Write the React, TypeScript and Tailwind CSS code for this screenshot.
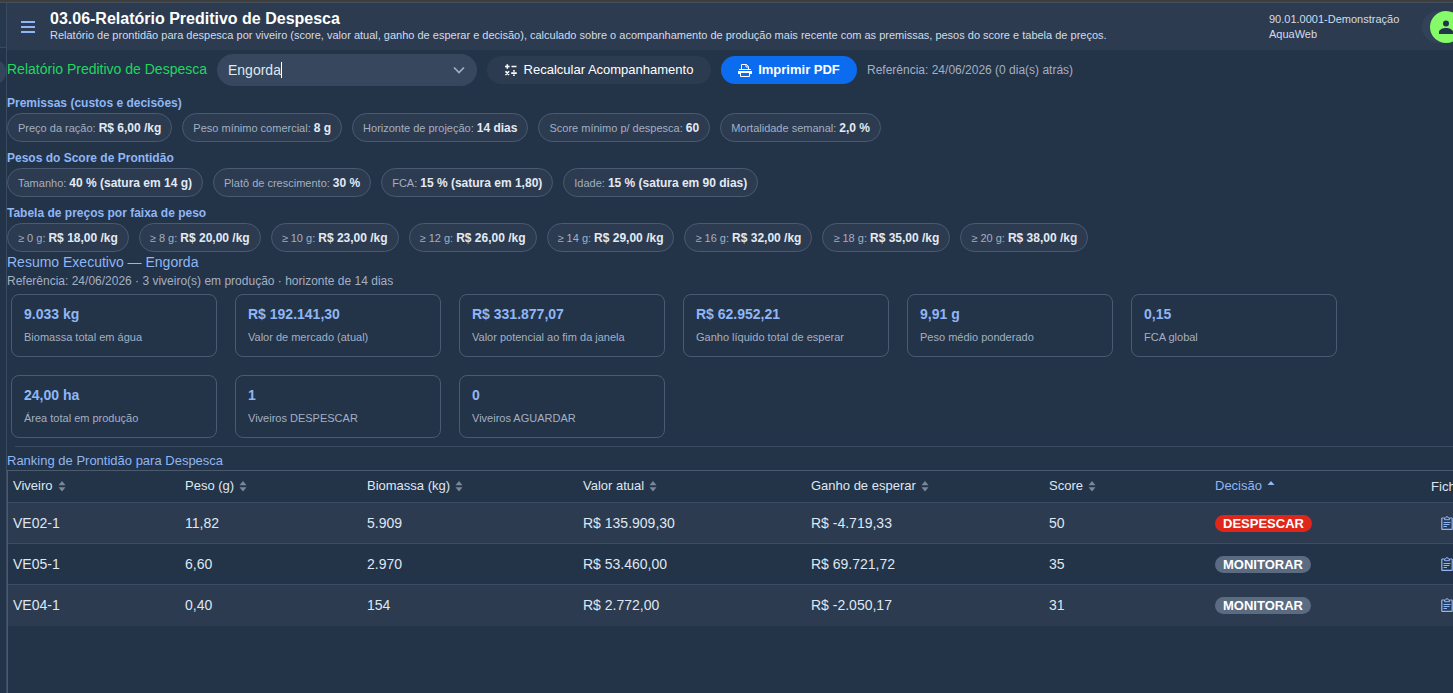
import { useState } from "react";
import type { ReactNode } from "react";

type Chip = { label: string; value: string };

const assumptions: Chip[] = [
  { label: "Preço da ração:", value: "R$ 6,00 /kg" },
  { label: "Peso mínimo comercial:", value: "8 g" },
  { label: "Horizonte de projeção:", value: "14 dias" },
  { label: "Score mínimo p/ despesca:", value: "60" },
  { label: "Mortalidade semanal:", value: "2,0 %" },
];

const weights: Chip[] = [
  { label: "Tamanho:", value: "40 % (satura em 14 g)" },
  { label: "Platô de crescimento:", value: "30 %" },
  { label: "FCA:", value: "15 % (satura em 1,80)" },
  { label: "Idade:", value: "15 % (satura em 90 dias)" },
];

const prices: Chip[] = [
  { label: "≥ 0 g:", value: "R$ 18,00 /kg" },
  { label: "≥ 8 g:", value: "R$ 20,00 /kg" },
  { label: "≥ 10 g:", value: "R$ 23,00 /kg" },
  { label: "≥ 12 g:", value: "R$ 26,00 /kg" },
  { label: "≥ 14 g:", value: "R$ 29,00 /kg" },
  { label: "≥ 16 g:", value: "R$ 32,00 /kg" },
  { label: "≥ 18 g:", value: "R$ 35,00 /kg" },
  { label: "≥ 20 g:", value: "R$ 38,00 /kg" },
];

const cards = [
  { value: "9.033 kg", label: "Biomassa total em água" },
  { value: "R$ 192.141,30", label: "Valor de mercado (atual)" },
  { value: "R$ 331.877,07", label: "Valor potencial ao fim da janela" },
  { value: "R$ 62.952,21", label: "Ganho líquido total de esperar" },
  { value: "9,91 g", label: "Peso médio ponderado" },
  { value: "0,15", label: "FCA global" },
  { value: "24,00 ha", label: "Área total em produção" },
  { value: "1", label: "Viveiros DESPESCAR" },
  { value: "0", label: "Viveiros AGUARDAR" },
];

const columns = [
  { title: "Viveiro", width: "w-[172px]" },
  { title: "Peso (g)", width: "w-[182px]" },
  { title: "Biomassa (kg)", width: "w-[216px]" },
  { title: "Valor atual", width: "w-[228px]" },
  { title: "Ganho de esperar", width: "w-[238px]" },
  { title: "Score", width: "w-[166px]" },
  { title: "Decisão", width: "w-[215px]", sorted: true },
];

const rows = [
  { cells: ["VE02-1", "11,82", "5.909", "R$ 135.909,30", "R$ -4.719,33", "50"], decision: "DESPESCAR" },
  { cells: ["VE05-1", "6,60", "2.970", "R$ 53.460,00", "R$ 69.721,72", "35"], decision: "MONITORAR" },
  { cells: ["VE04-1", "0,40", "154", "R$ 2.772,00", "R$ -2.050,17", "31"], decision: "MONITORAR" },
];

function MenuIcon() {
  return (
    <svg width="14" height="12" viewBox="0 0 14 12" fill="currentColor" aria-hidden="true">
      <path d="M0 0h14v2H0zM0 5h14v2H0zM0 10h14v2H0z" />
    </svg>
  );
}

function CalcIcon() {
  return (
    <svg width="12" height="12" viewBox="0 0 12 12" fill="none" stroke="currentColor" strokeWidth="1.6" aria-hidden="true">
      <path d="M0 2.5h4.6M2.3 0.2v4.6M6.5 2.5h5M0.5 7.3l3.6 3.6M4.1 7.3l-3.6 3.6M6.2 9.1h5.6" />
      <path d="M8.2 6.9h1.6M8.2 11.3h1.6" />
    </svg>
  );
}

function PrintIcon() {
  return (
    <svg width="14" height="14" viewBox="0 0 14 14" aria-hidden="true">
      <path d="M3.5 6V1.5h5l2 2V6M8 1.500v2.500h2.500" fill="none" stroke="currentColor" />
      <path d="M1 6h12v1H1zM0 8h14v3h-2v-1H2v1H0z" fill="currentColor" />
      <path d="M2.500 10v3.500h9V10" fill="none" stroke="currentColor" />
    </svg>
  );
}

function ClipboardIcon() {
  return (
    <svg width="12" height="14" viewBox="0 0 12 14" fill="none" stroke="currentColor" aria-hidden="true">
      <path d="M3 2H1.2L0.8 2.4v10.5l0.4 0.4h9.6l0.4-0.4V2.4L10.8 2H9" strokeWidth="1.2" />
      <path d="M3.5 3.7V1.9h1.3L5.3 0.7h1.4l0.5 1.2h1.3v1.8z" />
      <path d="M2.5 6.5h7M2.5 8.5h6M2.5 10.5h3.5" />
    </svg>
  );
}

function SortIcon({ ascending = false }: { ascending?: boolean }) {
  return (
    <svg
      width="8"
      height="12"
      viewBox="0 0 8 12"
      className={ascending ? "text-[#8fb6f5]" : "text-[#79879a]"}
      fill="currentColor"
      aria-hidden="true"
    >
      {ascending ? <path d="M4 1l3.5 4h-7z" /> : <path d="M4 1l3.5 4.3h-7zM4 11.5l3.5-4.3h-7z" />}
    </svg>
  );
}

function ChipGroup({ title, chips }: { title: string; chips: Chip[] }) {
  return (
    <section>
      <h2 className="mb-0.5 h-4 text-xs leading-4 font-bold text-[#8fb6f5]">{title}</h2>
      <ul className="flex flex-wrap gap-[10px]">
        {chips.map((chip) => (
          <li
            key={chip.label}
            className="flex h-[29px] items-baseline gap-[3px] rounded-full border border-[#4a5a70] bg-[#2c3b50] px-[10px] text-[11px] leading-7 whitespace-nowrap text-[#a3b0c2]"
          >
            {chip.label}
            <b className="text-xs leading-7 text-[#e3eaf4]">{chip.value}</b>
          </li>
        ))}
      </ul>
    </section>
  );
}

function Th({ children, center = false }: { children: ReactNode; center?: boolean }) {
  return (
    <th
      scope="col"
      className={
        center
          ? "h-8 border-b border-[#3c4b61] px-[5px] text-center font-normal"
          : "h-8 border-b border-[#3c4b61] px-[5px] pb-0.5 text-left font-normal"
      }
    >
      {children}
    </th>
  );
}

export default function App() {
  const [phase, setPhase] = useState("Engorda");

  return (
    <div className="flex min-h-screen flex-col overflow-hidden bg-[#233348] font-['Liberation_Sans',Arial,sans-serif] text-[#dfe7f2]">
      <div className="h-[3px] border-b border-[#46505c] bg-[#3d3f3d]" />
      <div className="flex flex-1">
        <aside className="w-[7px] shrink-0 overflow-hidden border-r border-[#3a4a60]">
          <div className="h-[45px] border-b border-[#3a4a60] bg-[#27374c]" />
          <div className="mt-3 -ml-4 h-6 w-[22px] rounded-full bg-[#34445a]" />
        </aside>

        <div className="-mr-4 flex min-w-0 flex-1 flex-col">
          <header className="flex h-[47px] items-center bg-[#2c3b50] pr-[7px]">
            <button type="button" aria-label="Menu" className="ml-[14px] text-[#8fb6f5]">
              <MenuIcon />
            </button>
            <div className="ml-[15px] flex-1 pb-0.5">
              <h1 className="text-base leading-[18px] font-bold text-white">
                03.06-Relatório Preditivo de Despesca
              </h1>
              <p className="text-[11px] leading-[14px] text-[#d3dce9]">
                Relatório de prontidão para despesca por viveiro (score, valor atual, ganho de esperar e decisão),
                calculado sobre o acompanhamento de produção mais recente com as premissas, pesos do score e tabela de
                preços.
              </p>
            </div>
            <p className="mr-[13px] w-[140px] shrink-0 text-[11px] leading-[15px] text-[#d3dce9]">
              90.01.0001-Demonstração AquaWeb
            </p>
            <button
              type="button"
              aria-label="Conta"
              className="flex h-8 w-10 shrink-0 justify-end rounded-full bg-[#324257]"
            >
              <span className="flex size-8 items-center justify-center rounded-full bg-[#85fb69] text-[#233348]">
                <svg width="14" height="14" viewBox="0 0 14 14" fill="currentColor" aria-hidden="true">
                  <circle cx="7" cy="3.5" r="3" />
                  <path d="M0 14v-2c0-2.5 4-4 7-4s7 1.5 7 4v2z" />
                </svg>
              </span>
            </button>
          </header>

          <main className="flex flex-1 flex-col">
            <div className="mt-1 flex items-center gap-[10px]">
              <label htmlFor="phase" className="pb-0.5 text-sm text-[#1fd760]">
                Relatório Preditivo de Despesca
              </label>
              <div className="flex h-8 w-[260px] items-center rounded-full bg-[#37475d] pr-3 pl-[11px]">
                <input
                  id="phase"
                  value={phase}
                  onChange={(event) => setPhase(event.target.value)}
                  className="[field-sizing:content] bg-transparent text-sm outline-none"
                />
                <span className="h-4 w-px bg-white" />
                <button type="button" aria-label="Abrir lista" className="ml-auto text-[#a3b0c2]">
                  <svg width="12" height="8" viewBox="0 0 12 8" fill="none" stroke="currentColor" strokeWidth="1.7" aria-hidden="true">
                    <path d="M1 1.5l5 5 5-5" />
                  </svg>
                </button>
              </div>
              <button
                type="button"
                className="flex h-7 w-[224px] items-center justify-center gap-[7px] rounded-full bg-[#2c3b50] text-[13px] text-white"
              >
                <CalcIcon />
                Recalcular Acompanhamento
              </button>
              <button
                type="button"
                className="flex h-7 w-[136px] items-center justify-center gap-[6px] rounded-full bg-[#0b6cf0] text-[13px] font-bold text-white"
              >
                <PrintIcon />
                Imprimir PDF
              </button>
              <span className="text-xs text-[#a3b0c2]">Referência: 24/06/2026 (0 dia(s) atrás)</span>
            </div>

            <div className="mt-[9px] flex flex-col gap-2">
              <ChipGroup title="Premissas (custos e decisões)" chips={assumptions} />
              <ChipGroup title="Pesos do Score de Prontidão" chips={weights} />
              <ChipGroup title="Tabela de preços por faixa de peso" chips={prices} />
            </div>

            <h2 className="text-sm leading-5 text-[#8fb6f5]">Resumo Executivo — Engorda</h2>
            <p className="text-xs leading-[18px] text-[#a3b0c2]">
              Referência: 24/06/2026 · 3 viveiro(s) em produção · horizonte de 14 dias
            </p>

            <div className="mt-1 ml-1 flex flex-wrap gap-[18px]">
              {cards.map((card) => (
                <div key={card.label} className="h-[63px] w-[206px] rounded-lg border border-[#4a5a70] px-3 pt-[9px]">
                  <div className="text-sm leading-5 font-bold text-[#8fb6f5]">{card.value}</div>
                  <div className="mt-1 text-[11px] leading-[18px] text-[#a3b0c2]">{card.label}</div>
                </div>
              ))}
            </div>

            <hr className="mt-2 ml-2 border-[#3c4b61]" />
            <h2 className="mt-[5px] text-[13px] leading-[18px] text-[#8fb6f5]">Ranking de Prontidão para Despesca</h2>

            <div className="flex-1 border-t border-l border-[#4a5a70]">
              <table className="w-full table-fixed border-separate border-spacing-0">
                <colgroup>
                  {columns.map((column) => (
                    <col key={column.title} className={column.width} />
                  ))}
                  <col className="w-11" />
                </colgroup>
                <thead className="text-[13px]">
                  <tr>
                    {columns.map((column) => (
                      <Th key={column.title}>
                        <button
                          type="button"
                          className={
                            column.sorted ? "flex items-center gap-[5px] text-[#8fb6f5]" : "flex items-center gap-[5px]"
                          }
                        >
                          {column.title}
                          <SortIcon ascending={column.sorted} />
                        </button>
                      </Th>
                    ))}
                    <Th center>Ficha</Th>
                  </tr>
                </thead>
                <tbody className="text-sm [&>tr:last-child>td]:border-transparent">
                  {rows.map((row) => (
                    <tr key={row.cells[0]} className="odd:bg-[#2c3b50]">
                      {row.cells.map((cell, index) => (
                        <td key={index} className="h-[41px] border-b border-[#3c4b61] px-[5px]">
                          {cell}
                        </td>
                      ))}
                      <td className="border-b border-[#3c4b61] px-[5px]">
                        <span
                          className={
                            row.decision === "DESPESCAR"
                              ? "block h-[17px] w-fit rounded-full bg-[#e0261b] px-2 text-[13px] leading-[18px] font-bold text-white"
                              : "block h-[17px] w-fit rounded-full bg-[#5b6b81] px-2 text-[13px] leading-[18px] font-bold text-white"
                          }
                        >
                          {row.decision}
                        </span>
                      </td>
                      <td className="border-b border-[#3c4b61]">
                        <button
                          type="button"
                          aria-label={`Ficha ${row.cells[0]}`}
                          className="mx-auto block text-[#8fb6f5]"
                        >
                          <ClipboardIcon />
                        </button>
                      </td>
                    </tr>
                  ))}
                </tbody>
              </table>
            </div>
          </main>
        </div>
      </div>
    </div>
  );
}
